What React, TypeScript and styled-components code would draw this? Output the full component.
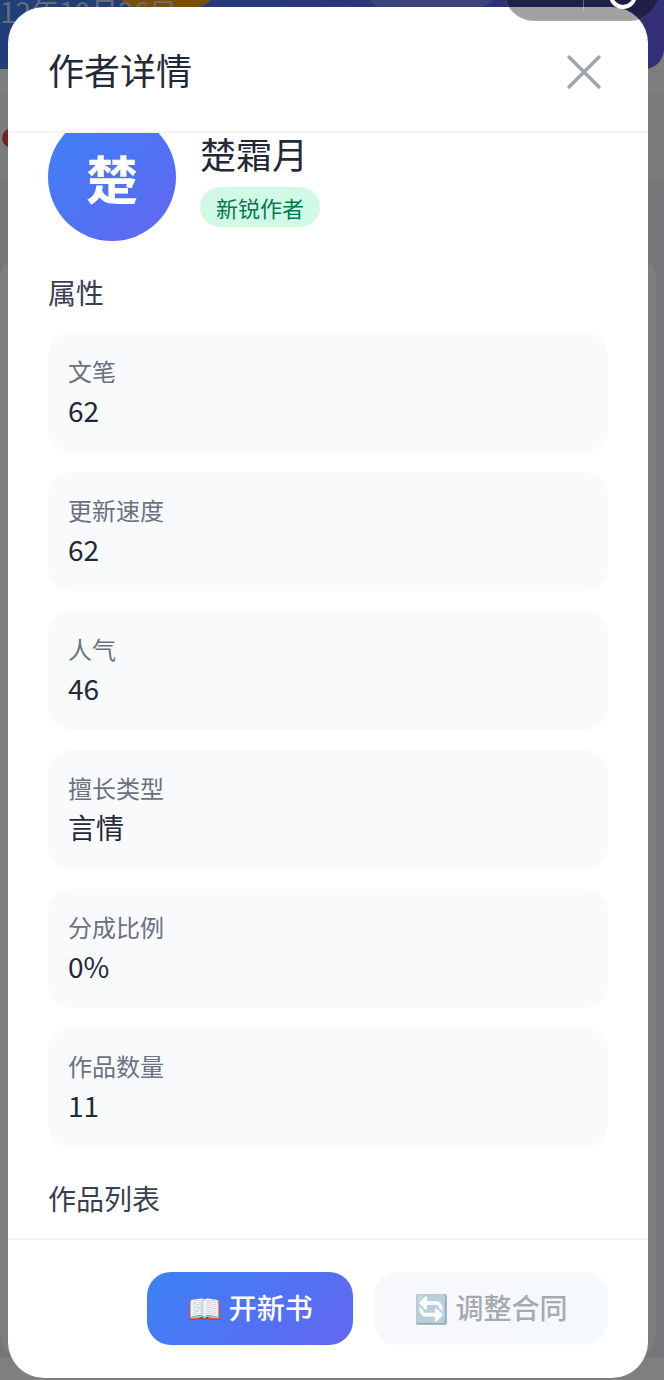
import React from "react";
import styled, { createGlobalStyle } from "styled-components";

const Global = createGlobalStyle`
  html, body { margin: 0; padding: 0; background: #ffffff; }
  * { box-sizing: border-box; }
  body { font-family: "Noto Sans CJK SC", "Noto Sans", sans-serif; }
`;

const Page = styled.div`
  position: relative;
  width: 664px;
  height: 1380px;
  overflow: hidden;
  background: #fff;
`;

const TopBand = styled.div`
  position: relative;
  height: 69px;
  overflow: hidden;
  background: linear-gradient(135deg, #3f7ff0, #6a5cf0);
  border-radius: 0 0 20px 0;
`;

const DateText = styled.div`
  position: absolute;
  left: 0;
  top: -9px;
  font-size: 28px;
  line-height: 40px;
  color: #cfd6ea;
  white-space: nowrap;
`;

const GoldPill = styled.div`
  position: absolute;
  left: 118px;
  top: -30px;
  width: 96px;
  height: 37px;
  border-radius: 18px;
  background: #f5a000;
`;

const GlassPill = styled.div`
  position: absolute;
  left: 366px;
  top: -30px;
  width: 130px;
  height: 37px;
  border-radius: 18px;
  background: rgba(255, 255, 255, 0.2);
`;

const StatBand = styled.div`
  height: 25px;
  background: #f8fafc;
`;

const Strip = styled.div`
  position: relative;
  height: 87px;
  background: #f7f7f5;
`;

const RedDot = styled.span`
  position: absolute;
  left: 2px;
  top: 34px;
  width: 20px;
  height: 20px;
  border-radius: 50%;
  background: #ef4444;
`;

const Lower = styled.div`
  height: 1177px;
  padding: 74px 8px 0 0;
  background: #eaedf4;
`;

const ContentPanel = styled.div`
  height: 100%;
  border-radius: 24px;
  background: #fbfbf9;
`;

const Overlay = styled.div`
  position: absolute;
  inset: 0;
  display: flex;
  align-items: flex-start;
  padding: 7px 16px 2px 8px;
  background: rgba(0, 0, 0, 0.5);
`;

const Modal = styled.section`
  display: flex;
  flex-direction: column;
  width: 640px;
  height: 1371px;
  overflow: hidden;
  background: #fff;
  border-radius: 36px;
`;

const ModalHeader = styled.header`
  flex: none;
  display: flex;
  align-items: center;
  justify-content: space-between;
  height: 126px;
  padding: 0 46px 0 40px;
  border-bottom: 2px solid #f3f4f6;
`;

const Title = styled.h2`
  margin: 0;
  font-size: 36px;
  font-weight: 400;
  line-height: 48px;
  color: #1f2937;
`;

const CloseBtn = styled.button`
  width: 36px;
  height: 36px;
  margin-top: 6px;
  padding: 0;
  border: 0;
  background: none;
  color: #9ca3af;
  display: flex;
`;

const Body = styled.div`
  flex: 1;
  min-height: 0;
  overflow: hidden;
  padding: 0 40px;
`;

const Scroller = styled.div`
  margin-top: -20px;
`;

const Profile = styled.div`
  display: flex;
  gap: 24px;
  align-items: flex-start;
`;

const Avatar = styled.div`
  flex: none;
  width: 128px;
  height: 128px;
  border-radius: 50%;
  display: flex;
  align-items: center;
  justify-content: center;
  background: linear-gradient(135deg, #3b82f6, #6366f1);
  color: #fff;
  font-size: 52px;
  font-weight: 700;
`;

const Who = styled.div`
  display: flex;
  flex-direction: column;
  align-items: flex-start;
  padding-top: 16px;
  gap: 10px;
`;

const Name = styled.div`
  font-size: 36px;
  font-weight: 400;
  line-height: 48px;
  color: #1f2937;
`;

const Badge = styled.span`
  height: 40px;
  padding: 0 16px;
  border-radius: 20px;
  background: #d1fae5;
  color: #047857;
  font-size: 22px;
  line-height: 40px;
`;

const SectionTitle = styled.h3<{ $first?: boolean }>`
  margin: ${(p) => (p.$first ? "32px 0 0" : "0")};
  font-size: 28px;
  font-weight: 400;
  line-height: 38px;
  color: #374151;
`;

const Attrs = styled.div`
  display: flex;
  flex-direction: column;
  gap: 20px;
  margin: 22px 0 32px;
`;

const AttrCard = styled.div`
  height: 119px;
  padding: 19px 20px;
  border-radius: 24px;
  background: #f8fafc;
`;

const AttrLabel = styled.div`
  font-size: 24px;
  line-height: 38px;
  color: #6b7280;
`;

const AttrValue = styled.div`
  font-size: 28px;
  line-height: 41px;
  color: #1f2937;
`;

const Footer = styled.footer`
  flex: none;
  height: 140px;
  display: flex;
  justify-content: flex-end;
  gap: 21px;
  padding: 32px 40px 0;
  border-top: 2px solid #f3f4f6;
`;

const ActionButton = styled.button<{ $primary?: boolean }>`
  height: 73px;
  padding: 0 ${(p) => (p.$primary ? "40px" : "40.5px")} 4px;
  border: 0;
  border-radius: 24px;
  font-family: inherit;
  font-size: 28px;
  font-weight: 500;
  white-space: nowrap;
  color: ${(p) => (p.$primary ? "#fff" : "#6b7280")};
  background: ${(p) => (p.$primary ? "linear-gradient(135deg, #3b82f6, #6366f1)" : "#f1f5f9")};
  opacity: ${(p) => (p.$primary ? 1 : 0.6)};
`;

const Capsule = styled.div`
  position: absolute;
  left: 504px;
  top: -40px;
  width: 156px;
  height: 61px;
  border-radius: 30px;
  background: rgba(0, 0, 0, 0.37);
  border: 1px solid rgba(255, 255, 255, 0.12);
`;

const CapsuleDivider = styled.span`
  position: absolute;
  left: 78px;
  top: 20px;
  width: 1px;
  height: 30px;
  background: rgba(255, 255, 255, 0.3);
`;

const CapsuleRing = styled.span`
  position: absolute;
  left: 104px;
  top: 20px;
  width: 28px;
  height: 28px;
  border-radius: 50%;
  border: 4px solid #fff;
`;

const attrs = [
  ["文笔", "62"],
  ["更新速度", "62"],
  ["人气", "46"],
  ["擅长类型", "言情"],
  ["分成比例", "0%"],
  ["作品数量", "11"],
];

export default function App() {
  return (
    <Page>
      <Global />
      <TopBand>
        <GoldPill />
        <GlassPill />
        <DateText>12年10月26日</DateText>
      </TopBand>
      <StatBand />
      <Strip>
        <RedDot />
      </Strip>
      <Lower>
        <ContentPanel />
      </Lower>
      <Overlay>
        <Modal>
          <ModalHeader>
            <Title>作者详情</Title>
            <CloseBtn aria-label="关闭">
              <svg width="36" height="36" viewBox="0 0 36 36" fill="none" stroke="currentColor" strokeWidth="3.4" strokeLinecap="round">
                <path d="M3 3 L33 33 M33 3 L3 33" />
              </svg>
            </CloseBtn>
          </ModalHeader>
          <Body>
            <Scroller>
              <Profile>
                <Avatar>楚</Avatar>
                <Who>
                  <Name>楚霜月</Name>
                  <Badge>新锐作者</Badge>
                </Who>
              </Profile>
              <SectionTitle $first>属性</SectionTitle>
              <Attrs>
                {attrs.map(([l, v]) => (
                  <AttrCard key={l}>
                    <AttrLabel>{l}</AttrLabel>
                    <AttrValue>{v}</AttrValue>
                  </AttrCard>
                ))}
              </Attrs>
              <SectionTitle>作品列表</SectionTitle>
            </Scroller>
          </Body>
          <Footer>
            <ActionButton $primary>📖 开新书</ActionButton>
            <ActionButton>🔄 调整合同</ActionButton>
          </Footer>
        </Modal>
      </Overlay>
      <Capsule>
        <CapsuleDivider />
        <CapsuleRing />
      </Capsule>
    </Page>
  );
}
